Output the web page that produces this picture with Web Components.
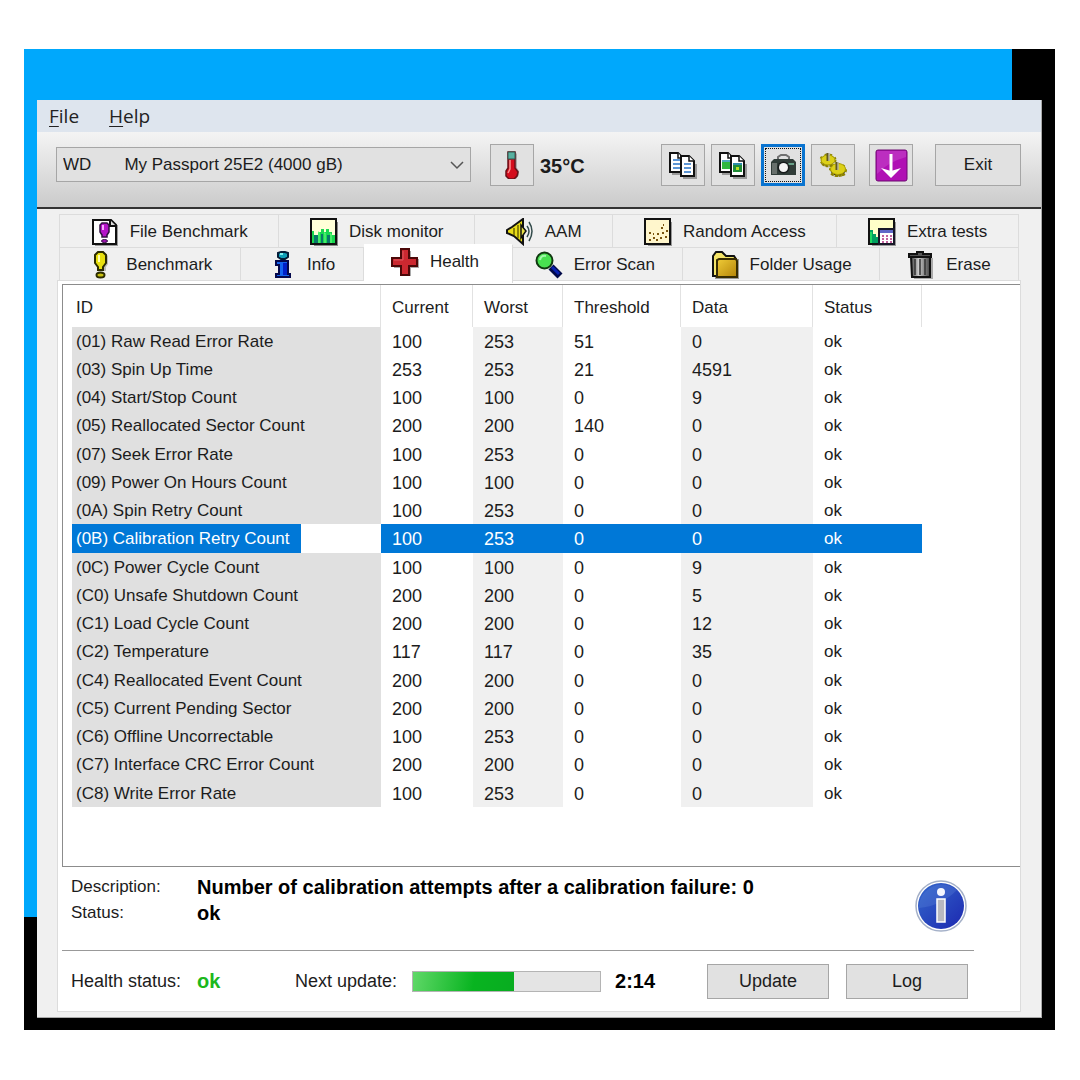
<!DOCTYPE html>
<html lang="en">
<head>
<meta charset="utf-8">
<title>Drive health</title>
<style>
  body { margin: 0; background: #fff; font: 17px/20px "Liberation Sans", Arial, sans-serif; color: #1c1c1c; }
</style>
</head>
<body>
<hd-desktop>
  <hd-window>
    <hd-menu></hd-menu>
    <hd-toolbar></hd-toolbar>
    <hd-tabs>
      <hd-smart-list></hd-smart-list>
      <hd-details></hd-details>
      <hd-footer></hd-footer>
    </hd-tabs>
  </hd-window>
</hd-desktop>

<script>
const define = (name, html) => customElements.define(name, class extends HTMLElement {
  constructor() {
    super();
    const template = document.createElement('template');
    template.innerHTML = '<style>:host,*{box-sizing:border-box}</style>' + (typeof html === 'function' ? html(this) : html);
    this.attachShadow({ mode: 'open' }).append(template.content.cloneNode(true));
  }
});

const page = (x, y, w, h, inner) => `<path d="M${x + 2} ${y + h + 2}h${w}v-${h - 6}" fill="none" stroke="#999" stroke-width="2"/><path d="M${x} ${y}h${w - 5}l5 5v${h - 5}h-${w}z" fill="#fff" stroke="#111" stroke-width="2"/><path d="M${x + w - 5} ${y}v5h5" fill="#fff" stroke="#111" stroke-width="1.5"/>${inner}`;

const ICONS = {
  fileBench: `<path d="M4 27h22V7" stroke="#999" stroke-width="2" fill="none"/><path d="M2 2h18l5 5v19H2z" fill="#fff" stroke="#111" stroke-width="2"/><path d="M19 2v6h6" fill="#ddd" stroke="#111" stroke-width="2"/><path d="M11 5h5l2 2v7l-2 3v2h-5v-2l-2-3V7z" fill="#b414c8" stroke="#301040" stroke-width="1.5"/><path d="M12 7v5" stroke="#f6a8ff" stroke-width="2"/><ellipse cx="13.500" cy="23" rx="3" ry="1.500" fill="#a010b0" stroke="#301040"/>`,
  bars: `<path d="M4 27h23V4" stroke="#888" stroke-width="2" fill="none"/><path d="M1 1h25v25H1z" fill="#ffffd8" stroke="#111" stroke-width="2"/><path d="M2 13h2v4h4v-3h3v-3h3v3h2v-3h3v3h3v3h3v8H2z" fill="#18d850"/><path d="M4 17h4v8H4zM11 16h2v9h-2zM17 17h3v8h-3z" fill="#087868"/><path d="M8 14h1v11M14 15h1v10M20 16h1v9" stroke="#70ff80" fill="none"/>`,
  speaker: `<path d="M1 12l5-3L17 1v25l-9-8-7-3z" fill="#e8dc18" stroke="#111" stroke-width="2"/><path d="M8 10v7M12 7v13" stroke="#6c6400" stroke-width="1.500"/><path d="M15 7l5 6-5 7z" fill="#e8e048" stroke="#111" stroke-width="1.500"/><path d="M21 8q4 5 0 11M23 4q6 9 0 19" fill="none" stroke="#344c4c" stroke-width="1.500"/>`,
  scatter: `<path d="M4 27h23V4" stroke="#999" stroke-width="2" fill="none"/><path d="M1 1h25v25H1z" fill="#fff6cc" stroke="#111" stroke-width="2"/><path d="M5 14h2v2H5zM9 19h2v2H9zM5 21h2v2H5zM13 15h2v2h-2zM12 21h2v2h-2zM17 9h2v2h-2zM19 6h1v2h-1zM18 14h2v2h-2zM22 12h2v2h-2zM21 18h2v2h-2zM16 19h2v2h-2zM9 15h1v2H9z" fill="#7a5410"/>`,
  extra: `<path d="M4 27h23V4" stroke="#999" stroke-width="2" fill="none"/><path d="M1 1h25v25H1z" fill="#ffffc8" stroke="#111" stroke-width="2"/><path d="M2 12h3v4h3v3h3v6H2z" fill="#00a060"/><path d="M2 14h2v11H2z" fill="#20d860"/><path d="M11 11h15v15H11z" fill="#fff" stroke="#181828" stroke-width="2"/><path d="M12 12h13v3H12z" fill="#6068c8"/><path d="M14 18h2M18 18h2M22 18h2M14 21h2M18 21h2M22 21h2M14 24h2M18 24h2M22 24h2" stroke="#b03080" stroke-width="1.500"/>`,
  bench: `<path d="M13 2h5l3 3v8l-2 3v4h-7v-4l-2-3V5z" fill="#999" opacity=".6"/><path d="M11 1h5l3 3v8l-3 4v3h-5v-3l-3-4V4z" fill="#e8e010" stroke="#2c2c00" stroke-width="2"/><path d="M12 4v7" stroke="#ffffb0" stroke-width="2"/><ellipse cx="13.500" cy="24" rx="4" ry="2.500" fill="#c8c010" stroke="#2c2c00" stroke-width="2"/>`,
  info: `<path d="M10 2l3-1h4l3 1v4l-3 2h-4l-3-2z" fill="#10a0b8" stroke="#041c38" stroke-width="2"/><path d="M8 10h12v13h2v3H8v-3h3v-9H8z" fill="#1464f0" stroke="#04084c" stroke-width="2"/><path d="M15 12h4v12h-4z" fill="#0020c8"/><path d="M12 3h3" stroke="#80f0f0" stroke-width="2"/>`,
  health: `<path d="M11 3h9v8h8v9h-8v8h-9v-8H3v-9h8z" fill="#aaa"/><path d="M10 1h8v9h8v8h-8v9h-8v-9H1v-8h9z" fill="#cc2830" stroke="#4c0808" stroke-width="2"/><path d="M12 3v9H3" fill="none" stroke="#e05860"/>`,
  lens: `<path d="M16 16l9 9" stroke="#000848" stroke-width="7"/><path d="M17 16l7 7" stroke="#0820b0" stroke-width="3"/><circle cx="9.500" cy="9.500" r="8" fill="#48e050" stroke="#103810" stroke-width="2"/><path d="M5 9q1-5 6-4" stroke="#a0f8a8" stroke-width="2" fill="none"/>`,
  folder: `<defs><linearGradient id="f" x1="0" y1="0" x2="1" y2="1"><stop offset="0" stop-color="#f0cc38"/><stop offset="1" stop-color="#b48408"/></linearGradient></defs><path d="M4 27h23V8" stroke="#999" stroke-width="2" fill="none"/><path d="M2 25V5l3-4h6l4 4h8l2 3v17z" fill="#f4e468" stroke="#111" stroke-width="2"/><path d="M6 26V9l2-1h17l1 2v16z" fill="url(#f)" stroke="#382c00" stroke-width="2"/>`,
  bin: `<defs><linearGradient id="b"><stop offset="0" stop-color="#444"/><stop offset=".4" stop-color="#ccc"/><stop offset="1" stop-color="#444"/></linearGradient></defs><path d="M7 27h18V7" stroke="#aaa" stroke-width="2" fill="none"/><path d="M4 6h19v20H5z" fill="url(#b)" stroke="#111" stroke-width="2"/><path d="M2 3h8V1h6v2h8v3H2z" fill="#555" stroke="#111" stroke-width="2"/><path d="M8 8v16M13 8v16M18 8v16" stroke="#333" stroke-width="1.500"/>`,
  thermo: `<path d="M12 1h5l2 2v14l2 3v4l-3 4h-7l-3-4v-4l2-3V3z" fill="#aaa"/><path d="M10 1h7v16l3 4-1 4-3 3h-5l-3-3v-5l2-3z" fill="#d40c1c" stroke="#681018" stroke-width="1.500"/><path d="M10 1h7v7h-7z" fill="#58b0a0" stroke="#305850"/><path d="M12 9v9l-2 4" stroke="#f89090" stroke-width="1.500" fill="none"/>`,
  copyText: page(1, 2, 13, 19, '<path d="M4 9h7M4 13h7M4 17h7" stroke="#2874c8" stroke-width="1.500"/>') + page(12, 5, 13, 20, '<path d="M15 13h7M15 17h7M15 21h7" stroke="#2874c8" stroke-width="1.500"/>'),
  copyImage: page(1, 2, 13, 19, '<path d="M3 9h8v9H3z" fill="#30b840"/><path d="M3 9h8v2H3z" fill="#50a8c0"/>') + page(12, 5, 13, 20, '<path d="M14 12h9v9H14z" fill="#208c38"/><path d="M14 12h9v2H14z" fill="#2c8ca8"/><path d="M17 16h3v3h-3z" fill="#b8e020"/>'),
  camera: `<path d="M9 9V6l3-2h5l3 2v3" fill="none" stroke="#707070" stroke-width="2"/><path d="M2 11l3-3h19l3 3v13H2z" fill="#303c38"/><path d="M3 12h5v11H3z" fill="#68706c"/><path d="M19 12h6v2h-6z" fill="#68a088"/><circle cx="14.500" cy="16.500" r="6" fill="#181c1c"/><circle cx="14.500" cy="16.500" r="4.500" fill="#f4f4f4"/>`,
  gears: `<g stroke="#8c8400" stroke-width="3" stroke-dasharray="2 3"><ellipse cx="9" cy="9" rx="7" ry="5"/><ellipse cx="19" cy="19" rx="7.500" ry="5.500"/></g><g fill="#dcd018" stroke="#aca000"><ellipse cx="9" cy="9" rx="7" ry="5"/><ellipse cx="19" cy="18" rx="7.500" ry="5.500"/></g><path d="M3 13q5 4 11 1M12 23q6 4 14 0" fill="none" stroke="#8c8000" stroke-width="2" stroke-dasharray="3 1"/><path d="M9 2v8M18 11v8" stroke="#605820" stroke-width="3"/><path d="M10 2v8M19 11v8" stroke="#ddd"/>`,
  down: `<rect x="0" y="0" width="31" height="31" rx="2" fill="#b010b4" stroke="#6c0870"/><path d="M1 1h29v6Q12 12 1 24z" fill="#d468d8" opacity=".35"/><path d="M15 4v18" stroke="#fff" stroke-width="3"/><path d="M5 18l10 10 10-10-10 3z" fill="#fff"/>`,
  chevron: `<path d="M1 2l6 6 6-6" fill="none" stroke="#555" stroke-width="1.500"/>`,
  badge: `<defs><linearGradient id="g" x1="0" y1="0" x2="1" y2="1"><stop offset="0" stop-color="#3468cc"/><stop offset="1" stop-color="#1c28b0"/></linearGradient></defs><circle cx="26" cy="26" r="25" fill="#fff" stroke="#a4b0c8" stroke-width="1.500"/><circle cx="26" cy="26" r="23" fill="url(#g)"/><path d="M4 28Q26 26 42 10A23 23 0 0 0 4 28z" fill="#6890e0" opacity=".25"/><circle cx="26" cy="12" r="4" fill="#f4f6ff"/><path d="M22 19h8v23h-8z" fill="#b8b8c0" stroke="#fff" stroke-width="1.500"/>`
};
const BOXES = { chevron: '0 0 14 10', badge: '0 0 52 52', down: '-1 -1 33 33' };

define('hd-icon', el => {
  const name = el.getAttribute('name');
  const box = BOXES[name] || '0 0 28 28';
  const [, , w, h] = box.split(' ');
  return `<style>:host{display:block;flex:none}svg{display:block}</style><svg width="${w}" height="${h}" viewBox="${box}" aria-hidden="true">${ICONS[name]}</svg>`;
});

define('hd-button', el => `
<style>
  :host { display: block; flex: none; }
  button { display: flex; align-items: center; justify-content: center; width: 100%; height: 100%; padding: 0;
    font: inherit; color: inherit; background: #e1e1e1; border: 1px solid #a6a6a6; }
  :host([focused]) button { border: 3px solid #0a74d0; outline: 1px dotted #111; outline-offset: -5px; }
</style>
<button type="button"${el.getAttribute('label') ? ` aria-label="${el.getAttribute('label')}"` : ''}><slot></slot></button>`);

define('hd-desktop', `
<style>
  :host { display: block; margin: 49px 25px 50px 24px; padding: 51px 13px 12px;
    background: linear-gradient(#00a8fc, #00a8fc) no-repeat 0 0 / calc(100% - 43px) calc(100% - 113px) #000; }
</style><slot></slot>`);

define('hd-window', `
<style>:host { display: flex; flex-direction: column; background: #f0f0f0; border-right: 1px solid #aaa; border-bottom: 1px solid #aaa; }</style>
<slot></slot>`);

define('hd-menu', `
<style>
  :host { display: block; background: #dee5ee; }
  nav { display: flex; gap: 30px; height: 32px; padding: 0 12px; align-items: center; font: 19px/26px "Open Sans", "Noto Sans", sans-serif; }
  a { color: #222; text-decoration: none; }
  u { text-underline-offset: 3px; }
</style>
<nav><a href="#file"><u>F</u>ile</a><a href="#help"><u>H</u>elp</a></nav>`);

define('hd-toolbar', `
<style>
  :host { display: flex; align-items: flex-start; height: 77px; padding: 12px 20px 0 19px;
    background: linear-gradient(#f4f4f4, #cbcbcb); border-bottom: 2px solid #333; }
  .drive { display: grid; flex: 0 1 415px; margin: 3px 19px 0 0; align-items: center; }
  select { grid-area: 1 / 1; width: 100%; height: 35px; padding: 0 30px 0 6px; appearance: none; font: inherit; color: inherit;
    background: #e1e1e1; border: 1px solid #a6a6a6; border-radius: 0; }
  .drive hd-icon { grid-area: 1 / 1; justify-self: end; margin-right: 7px; pointer-events: none; }
  hd-button { width: 44px; height: 42px; }
  output { flex: 1; margin-left: 6px; font: bold 20px/44px "Liberation Sans", Arial, sans-serif; }
  .tools { display: flex; gap: 6px; }
  .update { margin-left: 14px; }
  .exit { width: 86px; margin-left: 22px; }
</style>
<div class="drive">
  <select aria-label="Drive"><option>WD&nbsp;&nbsp;&nbsp;&nbsp;&nbsp;&nbsp;&nbsp;My Passport 25E2 (4000 gB)</option></select>
  <hd-icon name="chevron"></hd-icon>
</div>
<hd-button label="Temperature"><hd-icon name="thermo"></hd-icon></hd-button>
<output>35°C</output>
<div class="tools">
  <hd-button label="Copy text"><hd-icon name="copyText"></hd-icon></hd-button>
  <hd-button label="Copy image"><hd-icon name="copyImage"></hd-icon></hd-button>
  <hd-button label="Screenshot" focused><hd-icon name="camera"></hd-icon></hd-button>
  <hd-button label="Options"><hd-icon name="gears"></hd-icon></hd-button>
</div>
<hd-button class="update" label="Download"><hd-icon name="down"></hd-icon></hd-button>
<hd-button class="exit">Exit</hd-button>`);

const tab = ([icon, text, on]) => `<button type="button" role="tab" aria-selected="${!!on}"><hd-icon name="${icon}"></hd-icon>${text}</button>`;
const TABS = [
  [['fileBench', 'File Benchmark'], ['bars', 'Disk monitor'], ['speaker', 'AAM'], ['scatter', 'Random Access'], ['extra', 'Extra tests']],
  [['bench', 'Benchmark'], ['info', 'Info'], ['health', 'Health', true], ['lens', 'Error Scan'], ['folder', 'Folder Usage'], ['bin', 'Erase']]
];
define('hd-tabs', `
<style>
  :host { display: block; padding: 5px 20px 5px; }
  .row { display: flex; margin: 0 2px; border-left: 1px solid #dcdcdc; }
  button { display: flex; flex: 1 1 auto; align-items: center; justify-content: center; gap: 11px; height: 33px; padding: 2px 0 0;
    font: inherit; color: inherit; background: #f0f0f0; border: solid #dcdcdc; border-width: 1px 1px 0 0; white-space: nowrap; }
  button[aria-selected="true"] { position: relative; height: 39px; margin: -3px -6px -3px 0; padding: 0 6px 4px 0; background: #fff; border-top-color: #fff; }
  section { background: #fff; border: 1px solid #dcdcdc; padding: 3px 0 0 4px; }
</style>
<div role="tablist">${TABS.map(r => `<div class="row" role="presentation">${r.map(tab).join('')}</div>`).join('')}</div>
<section role="tabpanel" aria-label="Health"><slot></slot></section>`);

const ROWS = `01|Raw Read Error Rate|100|253|51|0
03|Spin Up Time|253|253|21|4591
04|Start/Stop Count|100|100|0|9
05|Reallocated Sector Count|200|200|140|0
07|Seek Error Rate|100|253|0|0
09|Power On Hours Count|100|100|0|0
0A|Spin Retry Count|100|253|0|0
0B|Calibration Retry Count|100|253|0|0
0C|Power Cycle Count|100|100|0|9
C0|Unsafe Shutdown Count|200|200|0|5
C1|Load Cycle Count|200|200|0|12
C2|Temperature|117|117|0|35
C4|Reallocated Event Count|200|200|0|0
C5|Current Pending Sector|200|200|0|0
C6|Offline Uncorrectable|100|253|0|0
C7|Interface CRC Error Count|200|200|0|0
C8|Write Error Rate|100|253|0|0`.split('\n').map(l => l.split('|'));
define('hd-smart-list', `
<style>
  :host { display: block; padding: 0 0 59px 9px; border: solid #8c8c8c; border-width: 1px 0 1px 1px; }
  table { width: 850px; max-width: 100%; table-layout: fixed; border-collapse: separate; border-spacing: 0; }
  th, td { padding: 0 0 0 11px; text-align: left; white-space: nowrap; }
  th { height: 42px; padding-top: 3px; font-weight: normal; font-size: 17px; border-right: 1px solid #e2e2e2; }
  td { height: 28px; padding-top: 1px; font-size: 18px; line-height: 20px; }
  tr:nth-child(4n) td { height: 29px; }
  th:first-child, td:first-child { padding-left: 4px; }
  td:first-child { background: #e0e0e0; font-size: 17px; }
  td:nth-child(3), td:nth-child(5) { background: #f0f0f0; }
  td:last-child { font-size: 17px; }
  tr.selected td { color: #fff; background: #0078d7; }
  tr.selected td:first-child { background: linear-gradient(#0078d7, #0078d7) no-repeat 0 0 / 229px 100% #fff; }
</style>
<table>
  <colgroup><col style="width:309px"><col style="width:92px"><col style="width:90px"><col style="width:118px"><col style="width:132px"><col></colgroup>
  <thead><tr><th>ID</th><th>Current</th><th>Worst</th><th>Threshold</th><th>Data</th><th>Status</th></tr></thead>
  <tbody>${ROWS.map(([id, name, ...n]) => `<tr${id === '0B' ? ' class="selected"' : ''}><td>(${id}) ${name}</td>${n.map(v => `<td>${v}</td>`).join('')}<td>ok</td></tr>`).join('')}</tbody>
</table>`);

define('hd-details', `
<style>
  :host { display: flex; justify-content: space-between; height: 84px; margin-right: 46px; padding: 7px 7px 0 9px; border-bottom: 1px solid #999; }
  dl { display: grid; grid-template-columns: 126px auto; grid-auto-rows: 26px; align-items: center; align-content: start; margin: 0; }
  dd { margin: 0; color: #000; font: bold 20px/26px "Liberation Sans", Arial, sans-serif; }
  hd-icon { margin-top: 6px; }
</style>
<dl><dt>Description:</dt><dd>Number of calibration attempts after a calibration failure: 0</dd><dt>Status:</dt><dd>ok</dd></dl>
<hd-icon name="badge"></hd-icon>`);

define('hd-footer', `
<style>
  :host { display: flex; align-items: center; height: 60px; margin-right: 52px; padding-left: 9px; font-size: 18px; }
  b { font-size: 20px; color: #000; }
  .label { width: 126px; }
  .ok { width: 98px; color: #1cb81c; }
  .bar { width: 189px; height: 21px; margin: 0 14px 0 15px; background: #e4e4e4; border: 1px solid #b4b4b4; }
  .fill { width: 54%; height: 100%; background: linear-gradient(100deg, #60d868, #08b420 60%, #08ac20); }
  .left { flex: 1; }
  .actions { display: flex; gap: 17px; }
  hd-button { width: 122px; height: 35px; }
</style>
<span class="label">Health status:</span><b class="ok">ok</b>
<span id="next">Next update:</span>
<div class="bar" role="progressbar" aria-labelledby="next" aria-valuenow="54"><div class="fill"></div></div>
<b class="left">2:14</b>
<div class="actions"><hd-button>Update</hd-button><hd-button>Log</hd-button></div>`);
</script>
</body>
</html>
